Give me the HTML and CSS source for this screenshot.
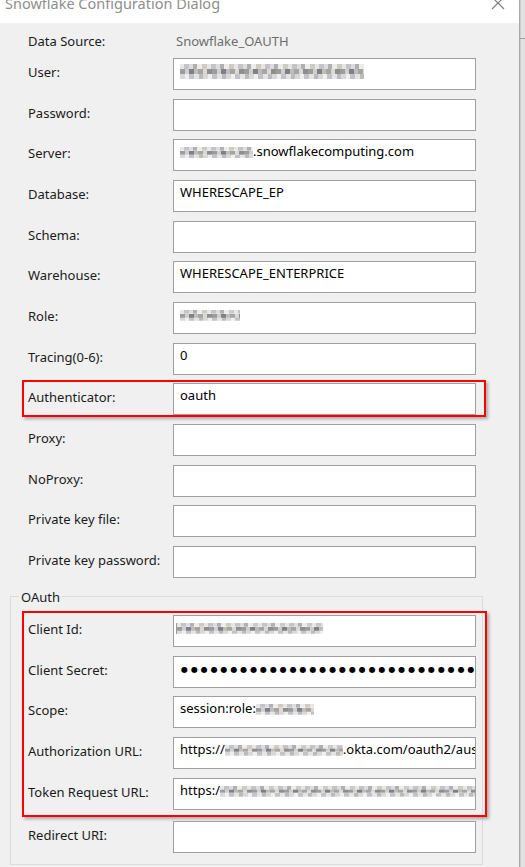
FILE: index.html
```html
<!DOCTYPE html>
<html lang="en">
<head>
<meta charset="utf-8">
<title>Snowflake Configuration Dialog</title>
<link rel="stylesheet" href="styles.css">
</head>
<body>
<div class="screen">
  <div class="dialog">
    <div class="titlebar">
      <div class="title">Snowflake Configuration Dialog</div>
      <svg class="close" width="14" height="14" viewBox="0 0 14 14" aria-hidden="true"><path d="M1 1L13 13M13 1L1 13" stroke="#7a7a7a" stroke-width="1.1" fill="none"/></svg>
    </div>
    <div class="content">
      <div class="ds-row"><span class="label">Data Source:</span><span class="value">Snowflake_OAUTH</span></div>
      <div class="rows">
        <div class="row"><span class="label">User:</span><div class="field"><span class="mosaic tall" style="width:184px"></span></div></div>
        <div class="row"><span class="label">Password:</span><div class="field"></div></div>
        <div class="row"><span class="label">Server:</span><div class="field"><span class="mosaic" style="width:73px"></span>.snowflakecomputing.com</div></div>
        <div class="row"><span class="label">Database:</span><div class="field">WHERESCAPE_EP</div></div>
        <div class="row"><span class="label">Schema:</span><div class="field"></div></div>
        <div class="row"><span class="label">Warehouse:</span><div class="field">WHERESCAPE_ENTERPRICE</div></div>
        <div class="row"><span class="label">Role:</span><div class="field"><span class="mosaic" style="width:60px"></span></div></div>
        <div class="row"><span class="label">Tracing(0-6):</span><div class="field">0</div></div>
        <div class="highlight single">
          <div class="row"><span class="label">Authenticator:</span><div class="field">oauth</div></div>
        </div>
        <div class="row"><span class="label">Proxy:</span><div class="field"></div></div>
        <div class="row"><span class="label">NoProxy:</span><div class="field"></div></div>
        <div class="row"><span class="label">Private key file:</span><div class="field"></div></div>
        <div class="row"><span class="label">Private key password:</span><div class="field"></div></div>
      </div>
      <fieldset class="group">
        <legend>OAuth</legend>
        <div class="highlight block">
          <div class="rows inner">
            <div class="row"><span class="label">Client Id:</span><div class="field"><span class="mosaic clientid" style="width:146px"></span></div></div>
            <div class="row"><span class="label">Client Secret:</span><div class="field"><span class="dots">●●●●●●●●●●●●●●●●●●●●●●●●●●●●●●●●●●●●●●●●</span></div></div>
            <div class="row"><span class="label">Scope:</span><div class="field">session:role:<span class="mosaic" style="width:58px"></span></div></div>
            <div class="row"><span class="label">Authorization URL:</span><div class="field">https://<span class="mosaic" style="width:118px"></span>.okta.com/oauth2/aus2x9f0</div></div>
            <div class="row"><span class="label">Token Request URL:</span><div class="field">https:/<span class="mosaic" style="width:260px"></span></div></div>
          </div>
        </div>
        <div class="rows redirect">
          <div class="row"><span class="label">Redirect URI:</span><div class="field"></div></div>
        </div>
      </fieldset>
    </div>
  </div>
  <div class="strip"><div class="strip-line"></div></div>
</div>
</body>
</html>
```

FILE: styles.css
```css
body {
  margin: 0;
  font-family: "Noto Sans", "Open Sans", sans-serif;
  font-size: 13px;
}

.screen {
  display: flex;
  width: 525px;
  height: 867px;
  overflow: hidden;
}

.dialog {
  width: 519px;
  flex: none;
  display: flex;
  flex-direction: column;
  background: #f0f0f0;
}

.titlebar {
  height: 23px;
  flex: none;
  background: #fff;
  display: flex;
  justify-content: space-between;
  align-items: flex-start;
  overflow: hidden;
}

.title {
  font-size: 14.5px;
  line-height: 20px;
  color: #8e8e8e;
  margin: -7px 0 0 5px;
  white-space: nowrap;
}

.close {
  margin: -4px 14px 0 0;
  flex: none;
}

.content {
  flex: 1;
  padding-top: 4px;
}

.ds-row {
  display: flex;
  height: 22px;
  margin: 0 0 9px 28px;
}

.label {
  width: 145px;
  flex: none;
  padding-top: 5px;
  line-height: 18px;
  color: #1b1b1b;
  white-space: nowrap;
}

.value {
  padding: 5px 0 0 3px;
  line-height: 18px;
  color: #6d6d6d;
}

.rows {
  display: flex;
  flex-direction: column;
  gap: 8.67px;
  width: 448px;
  margin-left: 28px;
}

.row {
  display: grid;
  grid-template-columns: 145px 303px;
  height: 32px;
}

.field {
  box-sizing: border-box;
  height: 32px;
  background: #fff;
  border: 1px solid #a0a0a0;
  padding: 2px 6px;
  line-height: 18px;
  white-space: nowrap;
  overflow: hidden;
  color: #000;
}

.highlight {
  border: 2px solid #ff0000;
  box-shadow: 2px 2px 3px rgba(0, 0, 0, 0.3);
}

.highlight.single {
  margin: -3px -10px -2px -6px;
  padding: 1px 8px 0 4px;
}

.group {
  margin: 10px 0 0 10px;
  width: 473px;
  box-sizing: border-box;
  border: 1px solid #dcdcdc;
  padding: 5px 0 11px 0;
  min-width: 0;
}

.group legend {
  margin-left: 8px;
  padding: 0 2px;
  line-height: 18px;
  color: #1b1b1b;
}

.highlight.block {
  margin-left: 11px;
  width: 465px;
  box-sizing: border-box;
  padding: 2px 0 5px 4px;
}

.rows.inner {
  margin-left: 0;
}

.rows.redirect {
  margin: 4px 0 0 17px;
}

.mosaic {
  display: inline-block;
  height: 11px;
  vertical-align: -2px;
  background-image:
    repeating-linear-gradient(to right, #e6e6e6 0 4px, #c4c4c4 4px 9px, #dedbe2 9px 13px, #b0b0b0 13px 17px, #ececec 17px 22px, #cfcac4 22px 27px),
    repeating-linear-gradient(to right, #9c9c9c 0 5px, #cfcfcf 5px 9px, #7f7f86 9px 14px, #bdbdbd 14px 18px, #a9a49e 18px 23px, #d9d9d9 23px 27px, #8e8e8e 27px 32px),
    repeating-linear-gradient(to right, #d8d8d8 0 5px, #efefef 5px 9px, #c2c2c8 9px 14px, #e4e4e4 14px 19px, #bbbbbb 19px 23px);
  background-size: 100% 34%, 100% 34%, 100% 34%;
  background-position: 0 0, 0 50%, 0 100%;
  background-repeat: no-repeat;
}

.mosaic.tall {
  height: 15px;
  vertical-align: -4px;
}

.mosaic.clientid {
  margin-left: -4px;
  border-left: 1px solid #9a9a9a;
}

.dots {
  font-family: "DejaVu Sans", sans-serif;
  font-size: 8px;
  letter-spacing: 2.9px;
  padding-left: 1px;
  vertical-align: 1px;
}

.strip {
  flex: 1;
  background: linear-gradient(to right, #a9a9a9 0 1px, #cdcdcd 1px 2px, #e2e2e2 2px);
}

.strip-line {
  height: 1px;
  margin-top: 38px;
  background: #a0a0a0;
}
```
